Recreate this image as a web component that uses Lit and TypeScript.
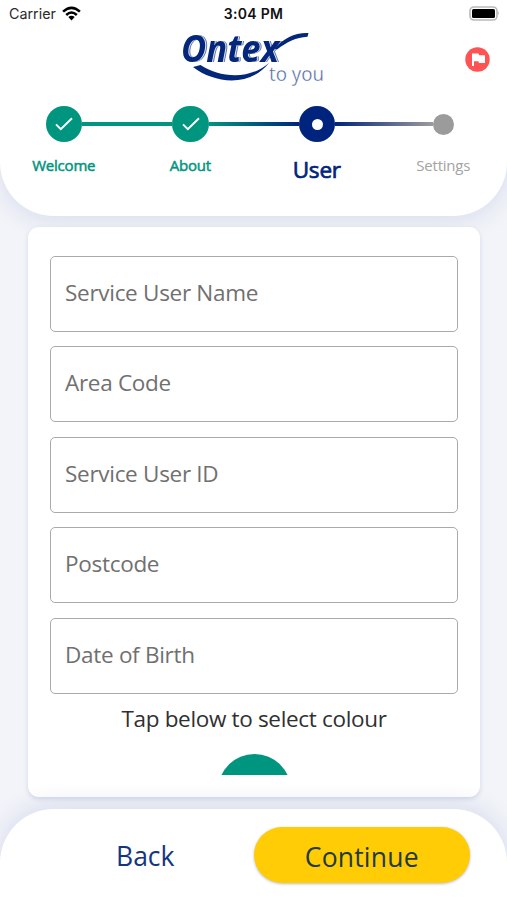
import { LitElement, html, css } from "lit";
import { customElement, property } from "lit/decorators.js";

const FONT = css`"Open Sans", "Noto Sans", sans-serif`;

@customElement("status-bar")
class StatusBar extends LitElement {
  static styles = css`
    :host { display: grid; grid-template-columns: 1fr auto 1fr; align-items: center; height: 27px; padding: 0 7px 0 9px; font-family: Inter, "Liberation Sans", sans-serif; line-height: 27px; white-space: nowrap; }
    .left { display: flex; align-items: center; gap: 6px; }
    .carrier { width: 47px; font-size: 14.3px; color: #2a2a2a; }
    .time { font-weight: 600; font-size: 14px; letter-spacing: .3px; color: #111; margin-right: 2px; }
    .battery { justify-self: end; }
    svg { display: block; margin-top: -1px; }
  `;
  render() {
    return html`
      <div class="left">
        <span class="carrier">Carrier</span>
        <svg width="19" height="15" viewBox="0 0 19 15" fill="none" stroke="#000" stroke-width="2.5">
          <path d="M1.1 5.7 Q9.5 -2 17.9 5.7" />
          <path d="M4.2 9 Q9.5 4.1 14.8 9" />
          <path d="M6.3 11 Q9.5 8.3 12.7 11 L9.5 14.4Z" fill="#000" stroke="none" />
        </svg>
      </div>
      <span class="time">3:04 PM</span>
      <svg class="battery" width="31" height="15" viewBox="0 0 31 15">
        <rect x="1" y="1" width="27" height="13" rx="4" fill="#fff" stroke="#b9b9b9" stroke-width="1.6" />
        <rect x="3" y="3" width="23" height="9" rx="1.5" fill="#000" />
        <path d="M29.2 5.2 Q31 7.2 29.2 9.2Z" fill="#aaa" />
      </svg>`;
  }
}

@customElement("brand-logo")
class BrandLogo extends LitElement {
  static styles = css`
    :host { display: block; }
    svg { display: block; overflow: visible; }
    .name { font: italic 700 38px ${FONT}; fill: #04277c; filter: drop-shadow(1px 0 0 #dfe5f1) drop-shadow(1px 0 0 #6078b0); }
    .sub { font: 400 20px ${FONT}; fill: #4a64a0; stroke: #fff; stroke-width: .35px; }
  `;
  render() {
    return html`<svg width="146" height="58" viewBox="0 0 146 58">
      <text class="name" x="0" y="34" textLength="98" lengthAdjust="spacingAndGlyphs">Ontex</text>
      <path d="M93 20.5 C104 10 113 4.5 127.5 5 L126.5 8.8 C115 9.5 106 14 96 21.5Z" fill="#04277c" />
      <path d="M12 39 L19.5 37 C38 49 67 53 88 35 C69 59 34 56 12 39Z" fill="#04277c" />
      <text class="sub" x="88" y="52.5" textLength="55" lengthAdjust="spacingAndGlyphs">to you</text>
    </svg>`;
  }
}

@customElement("progress-steps")
class ProgressSteps extends LitElement {
  static styles = css`
    :host { display: block; font-family: ${FONT}; }
    .track { display: flex; align-items: center; height: 38px; padding-left: 45.75px; }
    .dot { flex: none; display: grid; place-items: center; width: 36.5px; height: 36.5px; border-radius: 50%; background: #00957f; }
    .current { background: #00247d; }
    .current::after { content: ""; width: 11px; height: 11px; border-radius: 50%; background: #fff; }
    .pending { width: 21px; height: 21px; background: #9b9b9b; }
    .line { flex: none; width: 90px; height: 4.6px; background: #00957f; }
    .to-current { background: linear-gradient(90deg, #00957f, #00247d); }
    .to-pending { width: 97.75px; background: linear-gradient(90deg, #00247d, #9b9b9b); }
    .labels { display: grid; grid-template-columns: repeat(4, 126.5px); padding-left: .5px; height: 40px; margin-top: 2px; text-align: center; align-items: center; font-size: 15px; letter-spacing: -.2px; color: #00957f; }
    .labels span { white-space: nowrap; -webkit-text-stroke: .5px; }
    .labels .now { font-size: 22.5px; color: #00247d; margin-top: 8px; -webkit-text-stroke: .7px; }
    .labels .next { color: #a3a3a3; -webkit-text-stroke: 0; }
  `;
  render() {
    const check = html`<svg width="20" height="16" viewBox="0 0 20 16"><path d="M2 8.4 L6.8 13.2 L18 2.2" fill="none" stroke="#fff" stroke-width="2" /></svg>`;
    return html`
      <div class="track">
        <div class="dot">${check}</div><div class="line"></div>
        <div class="dot">${check}</div><div class="line to-current"></div>
        <div class="dot current"></div><div class="line to-pending"></div>
        <div class="dot pending"></div>
      </div>
      <div class="labels"><span>Welcome</span><span>About</span><span class="now">User</span><span class="next">Settings</span></div>`;
  }
}

@customElement("outlined-field")
class OutlinedField extends LitElement {
  @property() label = "";
  static styles = css`
    :host { display: flex; align-items: center; box-sizing: border-box; height: 76px; padding: 0 0 3px 14px; border: 1.5px solid #aaa; border-radius: 5px; background: #fff; font: 22.5px ${FONT}; letter-spacing: -.29px; color: #707070; }
  `;
  render() {
    return html`<span>${this.label}</span>`;
  }
}

@customElement("app-root")
class AppRoot extends LitElement {
  static styles = css`
    :host { display: flex; flex-direction: column; height: 900px; overflow: hidden; background: #f2f4f9; font-family: ${FONT}; }
    .header { flex: none; box-sizing: border-box; height: 216px; background: #fff; border-radius: 0 0 54px 54px; box-shadow: 0 4px 26px #00247d1c; }
    .brand { display: flex; height: 60px; padding: 1px 17px 0 181px; justify-content: space-between; }
    .flag { margin-top: 19px; }
    .steps { margin-top: 17px; }
    .card { flex: none; box-sizing: border-box; height: 570px; margin: 11px 27px 0 28px; padding: 29px 22px 22px; border-radius: 11px; background: #fff; box-shadow: 0 2px 5px #00247d22; }
    .scroll { display: flex; flex-direction: column; height: 519px; overflow: hidden; gap: 14.4px; }
    outlined-field { flex: none; }
    .hint { flex: none; margin-top: -4px; height: 30px; text-align: center; font-size: 22.5px; letter-spacing: -.33px; line-height: 30px; color: #303030; }
    .swatch { flex: none; align-self: center; width: 73px; height: 73px; border-radius: 50%; background: #00957f; margin-top: 6px; }
    .footer { flex: none; box-sizing: border-box; display: flex; height: 91px; margin-top: 12px; padding: 18px 37px 0; background: #fff; border-radius: 54px 54px 0 0; box-shadow: 0 -4px 26px #00247d1c; }
    .button { flex: 1; height: 56px; display: grid; place-items: center; padding-top: 2px; box-sizing: border-box; font-size: 26.5px; color: #14357f; }
    .primary { border-radius: 28px; background: #ffcc05; color: #1f3b3c; box-shadow: 0 1px 3px #0004; padding-top: 4px; letter-spacing: .2px; }
  `;
  render() {
    const fields = ["Service User Name", "Area Code", "Service User ID", "Postcode", "Date of Birth"];
    return html`
      <div class="header">
        <status-bar></status-bar>
        <div class="brand">
          <brand-logo></brand-logo>
          <svg class="flag" width="25" height="25" viewBox="0 0 25 25">
            <circle cx="12.5" cy="12.5" r="12.2" fill="#ff5252" />
            <path d="M7 6.5H13.5L14.2 8.2H20V16H14L13.3 14.3H9V19H7Z" fill="#fff" />
          </svg>
        </div>
        <progress-steps class="steps"></progress-steps>
      </div>
      <div class="card">
        <div class="scroll">
          ${fields.map((f) => html`<outlined-field label=${f}></outlined-field>`)}
          <div class="hint">Tap below to select colour</div>
          <div class="swatch"></div>
        </div>
      </div>
      <div class="footer">
        <div class="button">Back</div>
        <div class="button primary">Continue</div>
      </div>`;
  }
}
